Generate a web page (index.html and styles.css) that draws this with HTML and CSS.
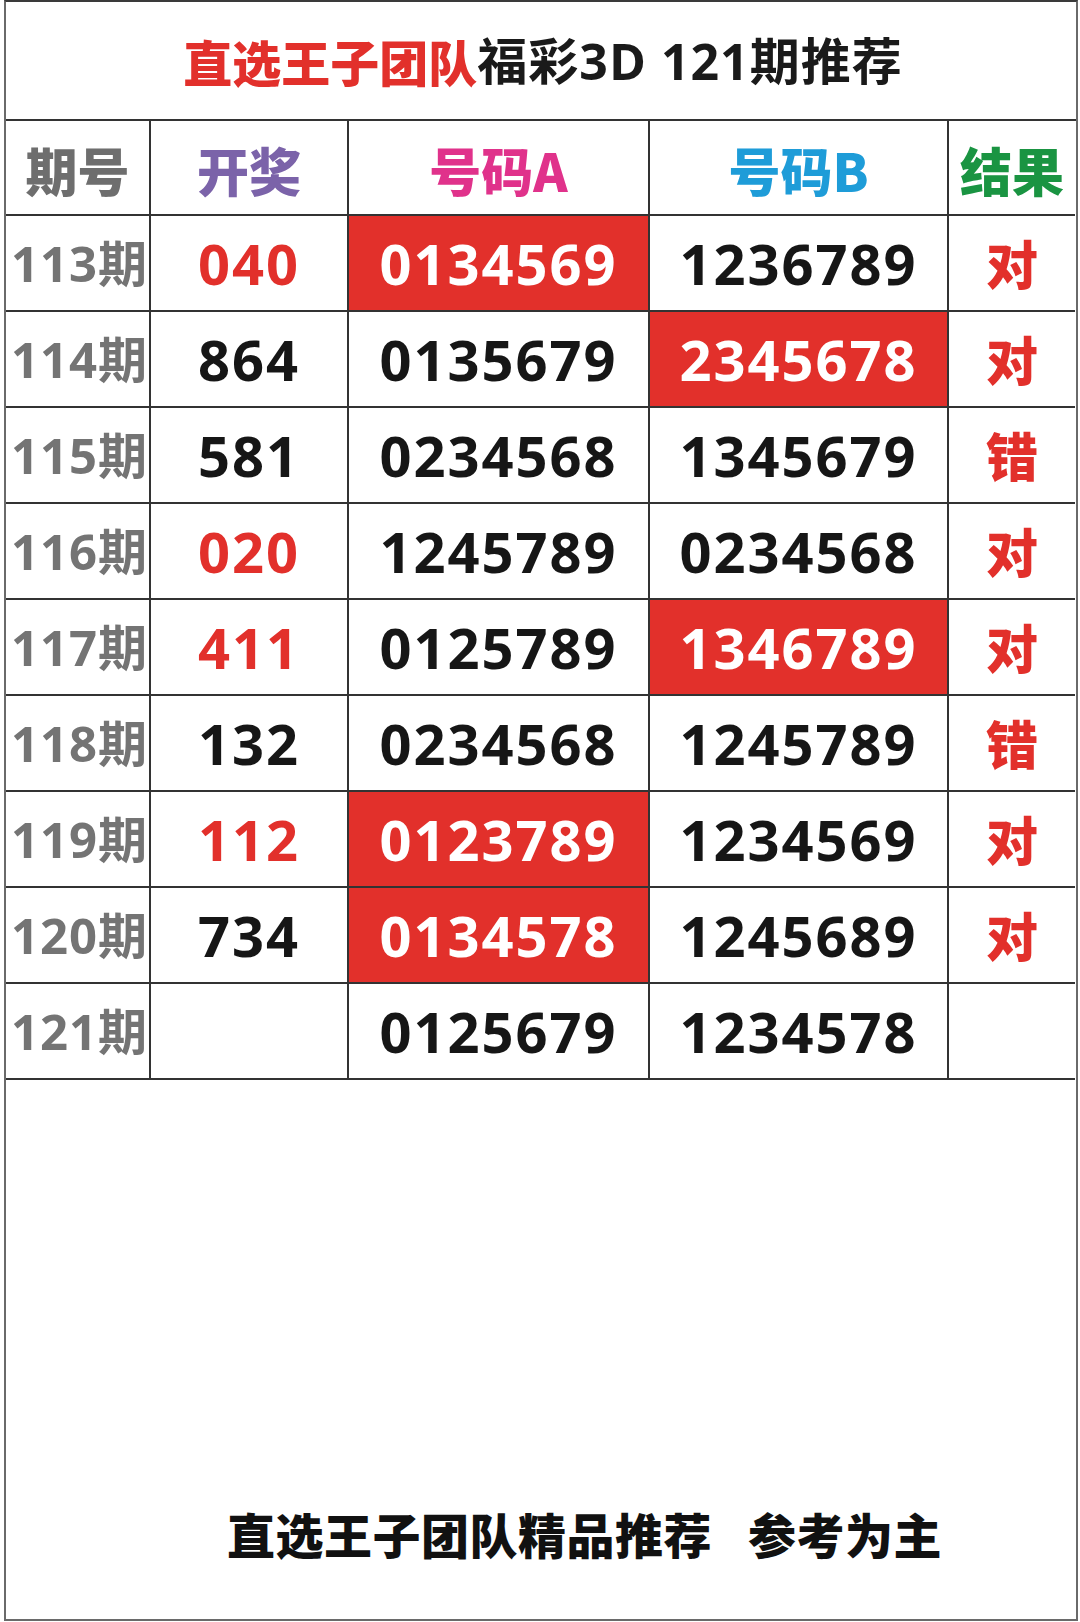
FILE: index.html
```html
<!DOCTYPE html>
<html lang="zh-CN">
<head>
<meta charset="utf-8">
<title>直选王子团队福彩3D 121期推荐</title>
<link rel="stylesheet" href="styles.css">
</head>
<body>
<div class="frame">
  <div class="title"><span class="brand">直选王子团队</span><span class="title-rest">福彩3D 121期推荐</span></div>
  <div class="grid">
    <div class="cell head c-period">期号</div>
    <div class="cell head c-draw">开奖</div>
    <div class="cell head c-a">号码A</div>
    <div class="cell head c-b">号码B</div>
    <div class="cell head c-res last">结果</div>

    <div class="cell period">113期</div>
    <div class="cell num red-text">040</div>
    <div class="cell num hit">0134569</div>
    <div class="cell num">1236789</div>
    <div class="cell res last">对</div>

    <div class="cell period">114期</div>
    <div class="cell num">864</div>
    <div class="cell num">0135679</div>
    <div class="cell num hit">2345678</div>
    <div class="cell res last">对</div>

    <div class="cell period">115期</div>
    <div class="cell num">581</div>
    <div class="cell num">0234568</div>
    <div class="cell num">1345679</div>
    <div class="cell res last">错</div>

    <div class="cell period">116期</div>
    <div class="cell num red-text">020</div>
    <div class="cell num">1245789</div>
    <div class="cell num">0234568</div>
    <div class="cell res last">对</div>

    <div class="cell period">117期</div>
    <div class="cell num red-text">411</div>
    <div class="cell num">0125789</div>
    <div class="cell num hit">1346789</div>
    <div class="cell res last">对</div>

    <div class="cell period">118期</div>
    <div class="cell num">132</div>
    <div class="cell num">0234568</div>
    <div class="cell num">1245789</div>
    <div class="cell res last">错</div>

    <div class="cell period">119期</div>
    <div class="cell num red-text">112</div>
    <div class="cell num hit">0123789</div>
    <div class="cell num">1234569</div>
    <div class="cell res last">对</div>

    <div class="cell period">120期</div>
    <div class="cell num">734</div>
    <div class="cell num hit">0134578</div>
    <div class="cell num">1245689</div>
    <div class="cell res last">对</div>

    <div class="cell period">121期</div>
    <div class="cell num"></div>
    <div class="cell num">0125679</div>
    <div class="cell num">1234578</div>
    <div class="cell res last"></div>
  </div>
  <div class="footer"><span>直选王子团队精品推荐</span><span>参考为主</span></div>
</div>
</body>
</html>
```

FILE: styles.css
```css
html, body {
  margin: 0;
  padding: 0;
  background: #ffffff;
}

body {
  font-family: "Noto Sans CJK SC", "Noto Sans", sans-serif;
}

.frame {
  box-sizing: border-box;
  width: 1074px;
  height: 1621px;
  margin-left: 4px;
  border: 2px solid #6a6a6a;
  border-top-color: #3a3a3a;
  display: flex;
  flex-direction: column;
}

.title {
  box-sizing: border-box;
  height: 119px;
  border-bottom: 2px solid #333333;
  display: flex;
  align-items: center;
  justify-content: center;
  line-height: 1;
  padding-left: 4px;
}

.brand {
  color: #e2302b;
  font-family: "Noto Sans CJK SC", sans-serif;
  font-size: 49px;
  font-weight: 900;
}

.title-rest {
  color: #1a1a1a;
  font-family: "Open Sans", "Noto Sans CJK SC", sans-serif;
  font-size: 50px;
  font-weight: 700;
  letter-spacing: 1px;
}

.grid {
  display: grid;
  grid-template-columns: 145px 198px 301px 299px 126px;
  grid-template-rows: 95px repeat(9, 96px);
}

.cell {
  box-sizing: border-box;
  border-right: 2px solid #333333;
  border-bottom: 2px solid #333333;
  display: flex;
  align-items: center;
  justify-content: center;
  line-height: 1;
  white-space: nowrap;
}

.cell.last {
  border-right: none;
}

.head {
  font-family: "Noto Sans CJK SC", sans-serif;
  font-weight: 900;
  font-size: 52px;
  padding-top: 4px;
}

.c-period { color: #6e6e6e; }
.c-draw { color: #7b63a9; }
.c-a { color: #e0328b; }
.c-b { color: #1e9cd8; }
.c-res { color: #1a9442; }

.period {
  font-family: "Open Sans", "Noto Sans CJK SC", sans-serif;
  font-weight: 700;
  font-size: 49px;
  color: #747474;
  letter-spacing: 1px;
  justify-content: flex-end;
  padding-right: 1px;
}

.num {
  font-family: "Open Sans", "Noto Sans", sans-serif;
  font-weight: 700;
  font-size: 56px;
  letter-spacing: 2px;
  color: #161616;
}

.red-text {
  color: #e2302b;
}

.hit {
  background: #e2302b;
  color: #ffffff;
}

.res {
  font-family: "Noto Sans CJK SC", sans-serif;
  font-weight: 900;
  font-size: 52px;
  color: #e2302b;
}

.footer {
  flex: 1;
  display: flex;
  align-items: flex-end;
  gap: 36px;
  padding-left: 221px;
  padding-bottom: 62px;
  font-family: "Noto Sans CJK SC", sans-serif;
  font-weight: 900;
  font-size: 48px;
  letter-spacing: 0.5px;
  line-height: 1;
  color: #111111;
}
```
